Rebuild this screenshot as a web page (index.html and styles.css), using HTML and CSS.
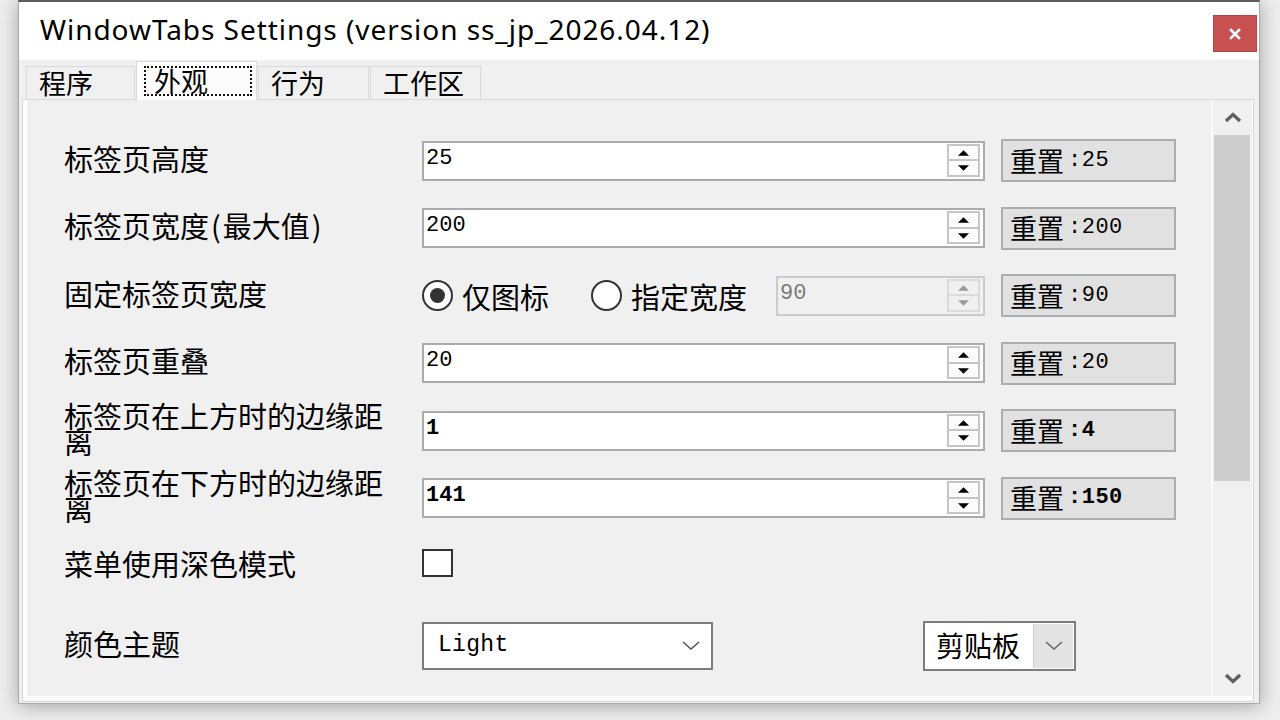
FILE: index.html
```html
<!DOCTYPE html>
<html lang="zh-CN">
<head>
<meta charset="utf-8">
<title>WindowTabs Settings</title>
<link rel="stylesheet" href="styles.css">
</head>
<body>
<div class="window">
  <header class="titlebar">
    <span class="title">WindowTabs Settings (version ss_jp_2026.04.12)</span>
    <button class="close" type="button" aria-label="关闭">
      <svg width="12" height="12" viewBox="0 0 12 12"><path d="M2 2 L10 10 M10 2 L2 10" stroke="#fff" stroke-width="2.6" stroke-linecap="square"/></svg>
    </button>
  </header>

  <div class="client">
    <nav class="tabs">
      <div class="tab">程序</div>
      <div class="tab active"><span class="focus">外观</span></div>
      <div class="tab">行为</div>
      <div class="tab">工作区</div>
    </nav>

    <div class="tab-body">
      <div class="page">
        <div class="content">

          <div class="row">
            <div class="label">标签页高度</div>
            <div class="field">
              <span class="value">25</span>
              <div class="spin"><span class="up"><svg viewBox="0 0 10 5"><polygon points="0,5 10,5 5,0"/></svg></span><span class="down"><svg viewBox="0 0 10 5"><polygon points="0,0 10,0 5,5"/></svg></span></div>
            </div>
            <button class="reset" type="button">重置<span class="num">:25</span></button>
          </div>

          <div class="row">
            <div class="label">标签页宽度<span class="paren">(</span>最大值<span class="paren">)</span></div>
            <div class="field">
              <span class="value">200</span>
              <div class="spin"><span class="up"><svg viewBox="0 0 10 5"><polygon points="0,5 10,5 5,0"/></svg></span><span class="down"><svg viewBox="0 0 10 5"><polygon points="0,0 10,0 5,5"/></svg></span></div>
            </div>
            <button class="reset" type="button">重置<span class="num">:200</span></button>
          </div>

          <div class="row">
            <div class="label">固定标签页宽度</div>
            <div class="options">
              <label class="radio checked"><span class="dot"></span>仅图标</label>
              <label class="radio"><span class="dot"></span>指定宽度</label>
              <div class="field disabled">
                <span class="value">90</span>
                <div class="spin"><span class="up"><svg viewBox="0 0 10 5"><polygon points="0,5 10,5 5,0"/></svg></span><span class="down"><svg viewBox="0 0 10 5"><polygon points="0,0 10,0 5,5"/></svg></span></div>
              </div>
            </div>
            <button class="reset" type="button">重置<span class="num">:90</span></button>
          </div>

          <div class="row">
            <div class="label">标签页重叠</div>
            <div class="field">
              <span class="value">20</span>
              <div class="spin"><span class="up"><svg viewBox="0 0 10 5"><polygon points="0,5 10,5 5,0"/></svg></span><span class="down"><svg viewBox="0 0 10 5"><polygon points="0,0 10,0 5,5"/></svg></span></div>
            </div>
            <button class="reset" type="button">重置<span class="num">:20</span></button>
          </div>

          <div class="row">
            <div class="label">标签页在上方时的边缘距离</div>
            <div class="field">
              <span class="value mono">1</span>
              <div class="spin"><span class="up"><svg viewBox="0 0 10 5"><polygon points="0,5 10,5 5,0"/></svg></span><span class="down"><svg viewBox="0 0 10 5"><polygon points="0,0 10,0 5,5"/></svg></span></div>
            </div>
            <button class="reset" type="button">重置<span class="num mono">:4</span></button>
          </div>

          <div class="row">
            <div class="label">标签页在下方时的边缘距离</div>
            <div class="field">
              <span class="value mono">141</span>
              <div class="spin"><span class="up"><svg viewBox="0 0 10 5"><polygon points="0,5 10,5 5,0"/></svg></span><span class="down"><svg viewBox="0 0 10 5"><polygon points="0,0 10,0 5,5"/></svg></span></div>
            </div>
            <button class="reset" type="button">重置<span class="num mono">:150</span></button>
          </div>

          <div class="row">
            <div class="label">菜单使用深色模式</div>
            <span class="checkbox"></span>
          </div>

          <div class="row row-last">
            <div class="label">颜色主题</div>
            <div class="select">
              <span class="select-text">Light</span>
              <svg class="chev" width="18" height="10" viewBox="0 0 18 10"><path d="M1 1 L9 8 L17 1" fill="none" stroke="#555" stroke-width="1.6"/></svg>
            </div>
            <div class="combo">
              <span class="combo-text">剪贴板</span>
              <span class="combo-btn"><svg width="18" height="10" viewBox="0 0 18 10"><path d="M1 1 L9 8 L17 1" fill="none" stroke="#666" stroke-width="1.6"/></svg></span>
            </div>
          </div>

        </div>

        <div class="scrollbar">
          <div class="sb-arrow"><svg width="18" height="11" viewBox="0 0 18 11"><path d="M2 9 L9 2.5 L16 9" fill="none" stroke="#606060" stroke-width="3.4"/></svg></div>
          <div class="sb-track">
            <div class="sb-thumb"></div>
          </div>
          <div class="sb-arrow"><svg width="18" height="11" viewBox="0 0 18 11"><path d="M2 2 L9 8.5 L16 2" fill="none" stroke="#606060" stroke-width="3.4"/></svg></div>
        </div>
      </div>
    </div>
  </div>
</div>
</body>
</html>
```

FILE: styles.css
```css
* {
  box-sizing: border-box;
}

html,
body {
  margin: 0;
}

body {
  width: 1280px;
  height: 720px;
  overflow: hidden;
  padding-left: 18px;
  background: #eeeeee;
  font-family: "Noto Sans CJK SC", sans-serif;
  color: #000;
}

/* ---------- window frame ---------- */
.window {
  width: 1242px;
  height: 704px;
  display: flex;
  flex-direction: column;
  background: #fff;
  border: 1px solid #a9a9a9;
  border-top: 2px solid #5c5c5c;
  box-shadow: 0 2px 18px rgba(0, 0, 0, 0.32);
}

.titlebar {
  height: 58px;
  flex: none;
  display: flex;
  align-items: flex-start;
  padding-left: 21px;
  background: #fff;
}

.title {
  flex: 1;
  margin-top: 11px;
  font-family: "Noto Sans", sans-serif;
  font-size: 28px;
  line-height: 32px;
  letter-spacing: 0.95px;
}

.close {
  width: 44px;
  height: 37px;
  margin: 13px 2px 0 0;
  padding: 0;
  display: flex;
  align-items: center;
  justify-content: center;
  background: #c75050;
  border: 1px solid #b84444;
}

/* ---------- client area + tabs ---------- */
.client {
  flex: 1;
  display: flex;
  flex-direction: column;
  background: #f0f0f0;
}

.tabs {
  height: 39px;
  flex: none;
  display: flex;
  align-items: flex-end;
  gap: 1px;
  padding-left: 7px;
  position: relative;
  z-index: 1;
}

.tab {
  width: 111px;
  height: 33px;
  padding-left: 12px;
  border: 1px solid #d9d9d9;
  border-bottom: none;
  background: #f0f0f0;
  font-size: 27px;
  line-height: 32px;
}

.tab:first-child {
  width: 109px;
}

.tab.active {
  width: 121px;
  height: 39px;
  margin-bottom: -1px;
  padding: 4px 4px 4px 7px;
  background: #fcfcfc;
}

.focus {
  display: block;
  height: 30px;
  padding-left: 8px;
  border: 2px dotted #111;
  line-height: 26px;
}

.tab-body {
  flex: 1;
  margin: 0 5px 1px 3px;
  padding: 0 1px 5px 5px;
  border: 1px solid #d9d9d9;
  background: #fcfcfc;
  display: flex;
}

.page {
  flex: 1;
  display: flex;
  background: #f0f0f0;
  border-left: 1px solid #e4e4e4;
}

.content {
  flex: 1;
  padding: 27px 0 0 35px;
}

/* ---------- setting rows ---------- */
.row {
  height: 67.5px;
  display: flex;
  align-items: center;
}

.row-last {
  margin-top: 13px;
}

.label {
  width: 358px;
  flex: none;
  padding: 0 26px 6px 0;
  font-size: 29px;
  line-height: 26px;
}

.paren {
  padding: 0 2px;
}

.field {
  width: 563px;
  height: 40px;
  flex: none;
  display: flex;
  align-items: flex-start;
  background: #fff;
  border: 2px solid #ababab;
}

.value {
  flex: 1;
  padding: 5px 0 0 2px;
  font-family: "Liberation Mono", monospace;
  font-size: 22px;
  line-height: 22px;
}

.value.mono,
.num.mono {
  font-weight: bold;
}

.spin {
  width: 33px;
  height: 33px;
  margin: 1px 3px 0 0;
  display: flex;
  flex-direction: column;
  border: 2px solid #c6c6c6;
  background: #fcfcfc;
}

.spin span {
  flex: 1;
  display: flex;
  align-items: center;
  justify-content: center;
}

.spin .up {
  border-bottom: 2px solid #c6c6c6;
}

.spin svg {
  width: 11px;
  height: 6px;
  fill: #000;
}

.field.disabled {
  width: 209px;
  margin-left: auto;
  background: #f0f0f0;
  border-color: #cbcbcb;
}

.field.disabled .value {
  color: #7a7a7a;
}

.field.disabled .spin {
  background: #f0f0f0;
  border-color: #dadada;
}

.field.disabled .spin .up {
  border-color: #dadada;
}

.field.disabled .spin svg {
  fill: #9a9a9a;
}

.reset {
  width: 175px;
  height: 43px;
  margin-left: 16px;
  padding: 0 0 0 7px;
  display: flex;
  align-items: center;
  background: #e1e1e1;
  border: 2px solid #adadad;
  font-family: "Noto Sans CJK SC", sans-serif;
  font-size: 27px;
  line-height: 30px;
  color: #000;
  text-align: left;
}

.num {
  margin-left: 4px;
  font-family: "Liberation Mono", monospace;
  font-size: 22px;
  letter-spacing: 0.5px;
}

/* radio group */
.options {
  width: 563px;
  flex: none;
  display: flex;
  align-items: center;
}

.radio {
  display: flex;
  align-items: center;
  font-size: 29px;
  line-height: 30px;
}

.radio + .radio {
  margin-left: 42px;
}

.dot {
  width: 31px;
  height: 31px;
  margin-right: 9px;
  border: 2px solid #333;
  border-radius: 50%;
  background: #fff;
  display: flex;
  align-items: center;
  justify-content: center;
}

.radio.checked .dot::after {
  content: "";
  width: 15px;
  height: 15px;
  border-radius: 50%;
  background: #333;
}

.checkbox {
  width: 31px;
  height: 28px;
  margin-bottom: 5px;
  border: 2px solid #333;
  background: #fff;
}

/* drop-down lists */
.select {
  width: 291px;
  height: 48px;
  flex: none;
  display: flex;
  align-items: center;
  padding: 0 11px 0 14px;
  background: #fff;
  border: 2px solid #7d7d7d;
}

.select-text {
  flex: 1;
  padding-bottom: 3px;
  font-family: "Liberation Mono", monospace;
  font-size: 23px;
  letter-spacing: 0.3px;
}

.combo {
  width: 153px;
  height: 50px;
  margin-left: 210px;
  display: flex;
  background: #fff;
  border: 2px solid #7d7d7d;
}

.combo-text {
  flex: 1;
  padding-left: 11px;
  font-size: 28px;
  line-height: 44px;
}

.combo-btn {
  width: 40px;
  margin: 1px;
  display: flex;
  align-items: center;
  justify-content: center;
  background: #e3e3e3;
  border-left: 1px solid #cfcfcf;
}

/* ---------- vertical scrollbar ---------- */
.scrollbar {
  width: 41px;
  flex: none;
  display: flex;
  flex-direction: column;
  background: #f0f0f0;
  border-left: 2px solid #fafafa;
}

.sb-arrow {
  height: 35px;
  flex: none;
  display: flex;
  align-items: center;
  justify-content: center;
}

.sb-track {
  flex: 1;
  padding: 0 2px 0 1px;
}

.sb-thumb {
  height: 346px;
  background: #cdcdcd;
}
```
